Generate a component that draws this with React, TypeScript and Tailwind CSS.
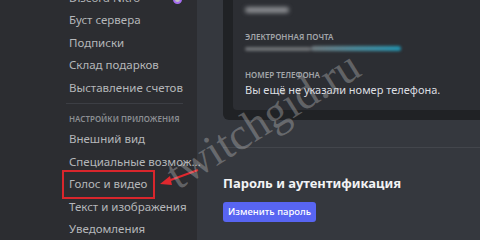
const sideTop = ['Discord Nitro', 'Буст сервера', 'Подписки', 'Склад подарков', 'Выставление счетов'];
const sideApp = ['Внешний вид', 'Специальные возмож...', 'Голос и видео', 'Текст и изображения', 'Уведомления'];

function SideItem({ label }: { label: string }) {
  return (
    <div className="flex h-[22.5px] items-center whitespace-nowrap pl-[69px] text-[11.5px] text-[#b5b7ba]">
      {label}
    </div>
  );
}

export default function App() {
  return (
    <div
      className="relative flex h-[240px] w-[480px] overflow-hidden bg-[#35383e]"
      style={{ fontFamily: '"Noto Sans", "Liberation Sans", Arial, sans-serif' }}
    >
      <aside className="relative h-full w-[197px] shrink-0 bg-[#2c2d31]">
        <div className="mt-[-14px]">
          {sideTop.map((label) => (
            <SideItem key={label} label={label} />
          ))}
          <div className="ml-[66px] mr-[14px] mt-[4px] h-px bg-[#3c3e44]" />
          <div className="flex h-[24px] items-center whitespace-nowrap pl-[69px] pt-[6px] text-[8px] font-semibold text-[#8b8e93]">
            НАСТРОЙКИ ПРИЛОЖЕНИЯ
          </div>
          {sideApp.map((label) => (
            <SideItem key={label} label={label} />
          ))}
        </div>
        <span className="absolute left-[173px] top-[-5px] h-[9px] w-[9px] rounded-full border-2 border-[#a56cf0] bg-[#ffffff]/70" />
      </aside>

      <main className="flex min-w-0 flex-1 flex-col pl-[26px]">
        <section className="h-[120px] shrink-0 rounded-bl-[6px] bg-[#202225] pb-[10px] pl-[10px]">
          <div className="flex h-full flex-col rounded-bl-[4px] bg-[#2c2e33] pl-[12px]">
            <div className="mt-[7px] h-[6px] w-[44px] rounded-full bg-[#8a8c90] blur-[2px]" />
            <div className="mt-[18px] text-[8px] font-semibold text-[#a3a6aa]">ЭЛЕКТРОННАЯ ПОЧТА</div>
            <div className="mt-[3px] flex h-[5px] items-center blur-[1.5px]">
              <div className="h-[4px] w-[66px] rounded-full bg-[#6f7276]" />
              <div className="h-[5px] w-[90px] rounded-full bg-gradient-to-r from-[#6f7a80] via-[#4a8a9c] to-[#1f93b0]" />
            </div>
            <div className="mt-[18px] text-[8px] font-semibold text-[#a3a6aa]">НОМЕР ТЕЛЕФОНА</div>
            <div className="mt-[1px] text-[11px] text-[#dcdee1]">Вы ещё не указали номер телефона.</div>
          </div>
        </section>
        <div className="mt-[27px] h-px bg-[#43464c]" />
        <h2 className="mt-[26px] text-[13px] font-bold leading-[18px] text-[#f2f3f5]">Пароль и аутентификация</h2>
        <button
          type="button"
          className="mt-[10px] flex h-[20px] w-[93px] items-center justify-center rounded-[3px] bg-[#5865f2] text-[9.5px] font-medium text-white"
        >
          Изменить пароль
        </button>
      </main>

      <div className="absolute left-[62px] top-[170px] h-[29px] w-[93px] border-2 border-[#d9262c]" />
      <svg className="absolute left-0 top-0" width="480" height="240" viewBox="0 0 480 240">
        <line x1="198" y1="170" x2="168" y2="181" stroke="#e0282e" strokeWidth="2" />
        <polygon points="160,184 170,176 172,185" fill="#e0282e" />
      </svg>

      <span
        className="pointer-events-none absolute left-[263px] top-[120px] whitespace-nowrap text-[45px] leading-none text-[#c9c9c9]/35"
        style={{ fontFamily: '"Liberation Serif", "DejaVu Serif", serif', transform: 'translate(-50%, -50%) rotate(-32deg)' }}
      >
        twitchgid.ru
      </span>
    </div>
  );
}
